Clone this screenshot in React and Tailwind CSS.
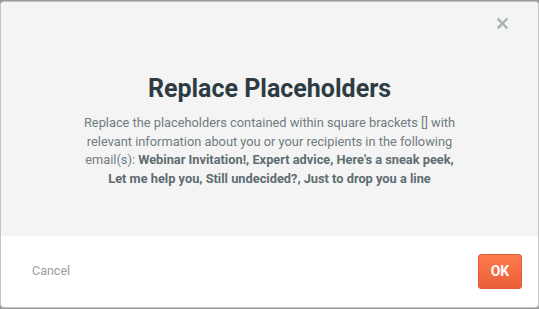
export default function App() {
  return (
    <div className="w-[539px] h-[309px] bg-[#9a9a9a] pt-px" style={{ fontFamily: 'Roboto, "Liberation Sans", sans-serif' }}>
      <div className="flex h-[307px] flex-col overflow-hidden rounded-[4px] border border-[#c4c4c4] bg-white">
        {/* Body */}
        <div className="relative flex h-[234px] flex-col items-center bg-[#f4f4f4] px-10 pt-[72px]">
          <button className="absolute right-[30px] top-[16px] text-[#a7b3b6]">
            <svg width="11" height="11" viewBox="0 0 11 11">
              <path d="M1.5 1.5 L9.5 9.5 M9.5 1.5 L1.5 9.5" stroke="currentColor" strokeWidth="2.4" strokeLinecap="square" />
            </svg>
          </button>
          <h1 className="text-[25px] font-bold leading-[30px] text-[#2d3c42]">Replace Placeholders</h1>
          <p className="mt-[10px] max-w-[385px] text-center text-[12.8px] leading-[18.5px] text-[#6f7c81]">
            Replace the placeholders contained within square brackets [] with relevant information about you or your recipients in the following email(s):{' '}
            <span className="font-bold text-[#5f6d72]">
              Webinar Invitation!, Expert advice, Here's a sneak peek, Let me help you, Still undecided?, Just to drop you a line
            </span>
          </p>
        </div>
        {/* Footer */}
        <div className="flex flex-1 items-center justify-between pl-[31px] pr-[16px]">
          <button className="text-[12.5px] text-[#9c9c9c]">Cancel</button>
          <button className="h-[35px] w-[44px] rounded-[3px] border border-[#e05a32] bg-gradient-to-b from-[#ff7b4c] to-[#e95f37] text-[14px] font-bold text-white">
            OK
          </button>
        </div>
      </div>
    </div>
  );
}
